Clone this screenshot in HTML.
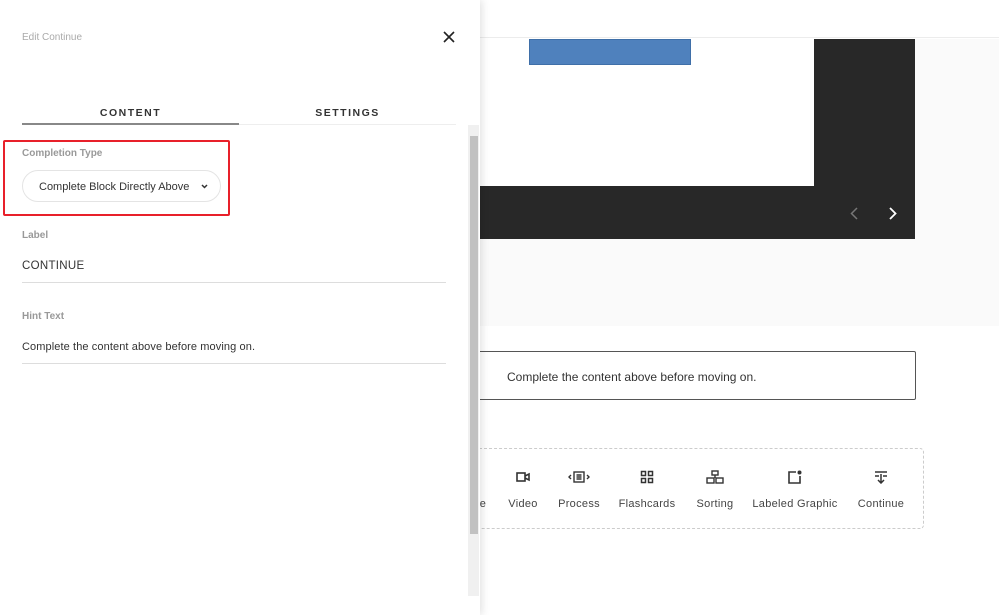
<!DOCTYPE html><html><head><style>
*{margin:0;padding:0;box-sizing:border-box}
body{width:999px;height:615px;overflow:hidden;background:#fff;font-family:"Liberation Sans",sans-serif;position:relative}
.a{position:absolute}
.lbl{font-size:10px;font-weight:bold;color:#999}
.it{position:absolute;top:470px;text-align:center;font-size:11px;color:#444;letter-spacing:.3px}
.it svg{display:block;margin:0 auto 14px}
</style></head><body>
<div class="a" style="left:480px;top:0;width:519px;height:38px;background:#fff;border-bottom:1px solid #ececec"></div>
<div class="a" style="left:480px;top:39px;width:519px;height:287px;background:#fafafa"></div>
<div class="a" style="left:480px;top:39px;width:435px;height:200px;background:#282828"></div>
<div class="a" style="left:480px;top:39px;width:334px;height:147px;background:#fff"></div>
<div class="a" style="left:529px;top:39px;width:162px;height:26px;background:#4f81bd;border:1px solid #3f6fa8"></div>
<svg class="a" style="left:850px;top:207px" width="8" height="13" viewBox="0 0 8 13" fill="none" stroke="#777" stroke-width="1.5"><path d="M7 1L1.5 6.5 7 12"/></svg>
<svg class="a" style="left:889px;top:207px" width="8" height="13" viewBox="0 0 8 13" fill="none" stroke="#fff" stroke-width="1.8"><path d="M1 1l5.5 5.5L1 12"/></svg>
<div class="a" style="left:470px;top:351px;width:446px;height:49px;border:1px solid #555;border-radius:2px;font-size:12px;color:#333;padding:18px 0 0 36px">Complete the content above before moving on.</div>
<div class="a" style="left:470px;top:448px;width:454px;height:81px;border:1px dashed #ccc;border-radius:4px"></div>
<div class="it" style="left:478px;width:10px;overflow:hidden"><div style="height:28px"></div>e</div>
<div class="it" style="left:503px;width:40px"><svg width="14" height="14" viewBox="0 0 14 14" fill="none" stroke="#333" stroke-width="1.6"><rect x="1" y="3" width="8" height="8"/><path d="M9 6l4-2v6l-4-2"/></svg>Video</div>
<div class="it" style="left:554px;width:50px"><svg width="22" height="14" viewBox="0 0 22 14" fill="none" stroke="#333" stroke-width="1.4"><rect x="6" y="2" width="10" height="10"/><path d="M8.5 5h5M8.5 7h5M8.5 9h5M3 5l-2 2 2 2M19 5l2 2-2 2"/></svg>Process</div>
<div class="it" style="left:617px;width:60px"><svg width="14" height="14" viewBox="0 0 14 14" fill="none" stroke="#333" stroke-width="1.5"><rect x="1.5" y="1.5" width="4" height="4"/><rect x="8.5" y="1.5" width="4" height="4"/><rect x="1.5" y="8.5" width="4" height="4"/><rect x="8.5" y="8.5" width="4" height="4"/></svg>Flashcards</div>
<div class="it" style="left:690px;width:50px"><svg width="18" height="14" viewBox="0 0 18 14" fill="none" stroke="#333" stroke-width="1.4"><rect x="6" y="1" width="6" height="4"/><rect x="1" y="8" width="7" height="5"/><rect x="10" y="8" width="7" height="5"/><path d="M9 5v3"/></svg>Sorting</div>
<div class="it" style="left:752px;width:86px"><svg width="14" height="14" viewBox="0 0 14 14" fill="none" stroke="#333" stroke-width="1.6"><path d="M8 2H1v11h11V6"/><circle cx="11.5" cy="2.5" r="2" fill="#333" stroke="none"/></svg>Labeled Graphic</div>
<div class="it" style="left:853px;width:56px"><svg width="14" height="14" viewBox="0 0 14 14" fill="none" stroke="#333" stroke-width="1.5"><path d="M1 2h12M1 6h4M9 6h4M7 4v9M4 10l3 3 3-3"/></svg>Continue</div>
<div class="a" style="left:0;top:0;width:480px;height:615px;background:#fff;box-shadow:2px 0 8px rgba(0,0,0,.12)"></div>
<div class="a" style="left:22px;top:32px;font-size:10px;color:#aaa">Edit Continue</div>
<svg class="a" style="left:443px;top:31px" width="12" height="12" viewBox="0 0 12 12" stroke="#222" stroke-width="1.6"><path d="M1 1l10 10M11 1L1 11"/></svg>
<div class="a" style="left:22px;top:107px;width:217px;text-align:center;font-size:10.5px;font-weight:bold;letter-spacing:1.5px;color:#333">CONTENT</div>
<div class="a" style="left:239px;top:107px;width:217px;text-align:center;font-size:10.5px;font-weight:bold;letter-spacing:1.5px;color:#333">SETTINGS</div>
<div class="a" style="left:22px;top:124px;width:434px;height:1px;background:#eee"></div>
<div class="a" style="left:22px;top:123px;width:217px;height:2px;background:#888"></div>
<div class="a" style="left:468px;top:125px;width:11px;height:471px;background:#f0f0f0"></div>
<div class="a" style="left:470px;top:136px;width:8px;height:398px;background:#c1c1c1"></div>
<div class="a" style="left:3px;top:140px;width:227px;height:76px;border:2px solid #e8202a;border-radius:2px"></div>
<div class="a lbl" style="left:22px;top:148px">Completion Type</div>
<div class="a" style="left:22px;top:170px;width:199px;height:32px;border:1px solid #e4e4e4;border-radius:16px;font-size:11px;color:#333;padding:10px 0 0 16px">Complete Block Directly Above<svg style="position:absolute;left:178px;top:13px" width="7" height="5" viewBox="0 0 7 5" fill="none" stroke="#333" stroke-width="1.5"><path d="M1 1l2.5 2.5L6 1"/></svg></div>
<div class="a lbl" style="left:22px;top:230px">Label</div>
<div class="a" style="left:22px;top:260px;font-size:11.5px;color:#333;letter-spacing:.3px">CONTINUE</div>
<div class="a" style="left:22px;top:282px;width:424px;height:1px;background:#ddd"></div>
<div class="a lbl" style="left:22px;top:311px">Hint Text</div>
<div class="a" style="left:22px;top:341px;font-size:11px;color:#333;letter-spacing:.1px">Complete the content above before moving on.</div>
<div class="a" style="left:22px;top:363px;width:424px;height:1px;background:#ddd"></div>
</body></html>
